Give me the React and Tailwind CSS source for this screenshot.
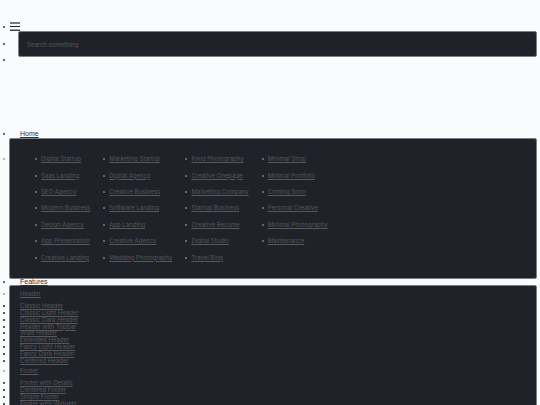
import React from 'react';

const demoColumns = [
    ['Digital Startup', 'Saas Landing', 'SEO Agency', 'Modern Business', 'Design Agency', 'App Presentation', 'Creative Landing'],
    ['Marketing Startup', 'Digital Agency', 'Creative Business', 'Software Landing', 'App Landing', 'Creative Agency', 'Wedding Photography'],
    ['Food Photography', 'Creative Onepage', 'Marketing Company', 'Startup Business', 'Creative Resume', 'Digital Studio', 'Travel Blog'],
    ['Minimal Shop', 'Minimal Portfolio', 'Coming Soon', 'Personal Creative', 'Minimal Photography', 'Maintenance'],
];

const headerLinks = [
    'Classic Header',
    'Classic Light Header',
    'Classic Dark Header',
    'Header with Topbar',
    'Wide Header',
    'Extended Header',
    'Fancy Light Header',
    'Fancy Dark Header',
    'Centered Header',
];

const footerLinks = ['Footer with Details', 'Centered Footer', 'Simple Footer', 'Footer with Widgets'];

// Small list marker, placed as the first item of a flex row
const Marker = ({ className }) => (
    <span aria-hidden="true" className={`h-[2px] w-[2px] shrink-0 ${className}`} />
);

const MenuLink = ({ children }) => (
    <a href="#" className="whitespace-nowrap underline hover:text-white">{children}</a>
);

// Dark dropdown panel
const Panel = ({ className, children }) => (
    <div className={`rounded-[2px] border border-[#7c7e82] bg-[#1f2229] text-[#56585b] ${className}`}>
        {children}
    </div>
);

// Sits above the panel below it, so that the underline stays visible
const MenuTitle = ({ children }) => (
    <div className="relative z-10 flex items-center gap-[15px] font-['Liberation_Sans',sans-serif] text-[7px] text-[#303236]">
        <Marker className="bg-[#66686b]" />
        <MenuLink>{children}</MenuLink>
    </div>
);

const LinkGroup = ({ title, links, className }) => (
    <li className="flex flex-col gap-[6px]">
        <div className="flex items-center gap-[15px]">
            <Marker className="rounded-full bg-[#a0a2a5]" />
            <MenuLink>{title}</MenuLink>
        </div>
        <ul className={`grid auto-rows-fr ${className}`}>
            {links.map((link) => (
                <li key={link} className="flex items-center gap-[15px]">
                    <Marker className="bg-[#55575a]" />
                    <MenuLink>{link}</MenuLink>
                </li>
            ))}
        </ul>
    </li>
);

const App = () => {
    return (
        <div className="h-screen overflow-hidden bg-[#fafbfd] px-[3px] pt-[22px] font-['Inter','Liberation_Sans',sans-serif] text-[6px] leading-[6px]">
            {/* Top tools: menu toggle, search and an empty slot */}
            <ul className="h-[109px]">
                <li className="flex items-center gap-1">
                    <Marker className="bg-[#66686b]" />
                    <button type="button" aria-label="Menu">
                        <svg className="block" width="11" height="9" viewBox="0 0 11 9" shapeRendering="crispEdges">
                            <rect x="1" y="0" width="10" height="2" fill="#77797b" />
                            <rect x="1" y="4" width="10" height="1" fill="#222428" />
                            <rect x="1" y="7" width="10" height="1" fill="#a4a6a8" />
                            <rect x="1" y="8" width="10" height="1" fill="#3a3c40" />
                        </svg>
                    </button>
                </li>
                <li className="flex items-center gap-[13px]">
                    <Marker className="bg-[#66686b]" />
                    <input
                        type="text"
                        aria-label="Search"
                        placeholder="Search something"
                        className="h-[26px] min-w-0 flex-1 rounded-[2px] border border-[#7c7e82] bg-[#1f2229] px-2 text-[#a0a2a5] outline-none placeholder:text-[#56585b]"
                    />
                </li>
                <li className="flex h-[6px] items-center">
                    <Marker className="bg-[#66686b]" />
                </li>
            </ul>

            <ul>
                <li>
                    <MenuTitle>Home</MenuTitle>
                    <div className="flex gap-1 pt-px">
                        <div className="pt-5">
                            <Marker className="block rounded-full bg-[#a0a2a5]" />
                        </div>
                        <Panel className="flex-1 py-3 pl-[25px]">
                            <div className="flex gap-[13px]">
                                {demoColumns.map((column) => (
                                    <ul key={column[0]} className="grid h-[115px] grid-rows-7">
                                        {column.map((name) => (
                                            <li key={name} className="flex items-center gap-1">
                                                <Marker className="bg-[#65676a]" />
                                                <MenuLink>{name}</MenuLink>
                                            </li>
                                        ))}
                                    </ul>
                                ))}
                            </div>
                        </Panel>
                    </div>
                </li>
                <li>
                    <MenuTitle>Features</MenuTitle>
                    <Panel className="ml-[6px] pt-[5px] pb-[11px]">
                        {/* Pulled left so that the markers hang outside the panel */}
                        <ul className="-ml-[7px] flex flex-col gap-1">
                            <LinkGroup title="Header" links={headerLinks} className="h-[61px]" />
                            <LinkGroup title="Footer" links={footerLinks} className="h-[27px]" />
                        </ul>
                    </Panel>
                </li>
            </ul>
        </div>
    );
};

export default App;
